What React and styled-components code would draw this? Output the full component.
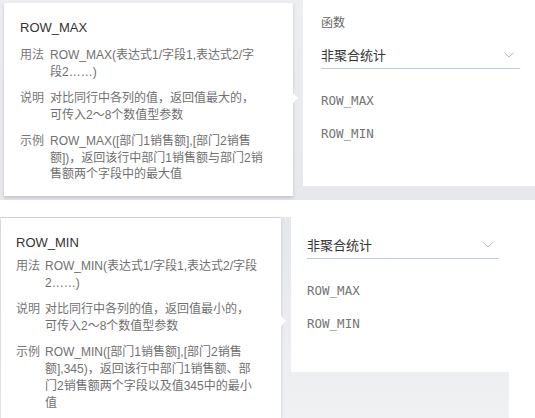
import React from "react";
import styled, { createGlobalStyle } from "styled-components";

const Global = createGlobalStyle`
  html, body { margin: 0; padding: 0; background: #ffffff; }
  body { width: 535px; height: 418px; overflow: hidden; font-family: "Liberation Sans", "Noto Sans CJK SC", sans-serif; }
`;

const Page = styled.div`
  width: 535px;
  height: 418px;
  display: flex;
  flex-direction: column;
  background: #ffffff;
`;

const ShotTop = styled.section`
  height: 200px;
  display: flex;
  align-items: flex-start;
  background: linear-gradient(180deg, #eceef1 0%, #e6e8ec 100%);
  box-sizing: border-box;
  padding-left: 4px;
`;

const Gap = styled.div`
  height: 17px;
  background: #ffffff;
`;

const ShotBottom = styled.section`
  height: 201px;
  width: 509px;
  display: flex;
  align-items: flex-start;
  background: linear-gradient(180deg, #e4e7ec 0%, #f0f1f3 100%);
  box-sizing: border-box;
  padding-left: 1px;
`;

const Tip = styled.div`
  position: relative;
  box-sizing: border-box;
  background: #ffffff;
  width: ${(p) => p.$w}px;
  height: ${(p) => p.$h}px;
  margin-top: ${(p) => p.$top}px;
  padding: ${(p) => p.$pad};
  border-top: ${(p) => (p.$line ? "1px solid #cfd3d8" : "none")};
  box-shadow: 0 2px 3px rgba(120, 128, 140, 0.35);
  display: flex;
  flex-direction: column;
  gap: ${(p) => p.$gap}px;
`;

const Arrow = styled.span`
  position: absolute;
  right: -5px;
  top: ${(p) => p.$y}px;
  width: 0;
  height: 0;
  border-top: 5px solid transparent;
  border-bottom: 5px solid transparent;
  border-left: 5px solid #ffffff;
`;

const Title = styled.div`
  font-size: 13px;
  line-height: 16px;
  color: #333333;
  margin-bottom: ${(p) => p.$mb}px;
`;

const Row = styled.div`
  display: flex;
  gap: ${(p) => p.$gap}px;
  font-size: 12px;
  line-height: ${(p) => p.$lh}px;
  color: #707070;
  white-space: nowrap;
`;

const Label = styled.span`
  flex: none;
  color: #767676;
`;

const Lines = styled.div`
  display: flex;
  flex-direction: column;
`;

const Panel = styled.div`
  box-sizing: border-box;
  background: #ffffff;
  margin-left: 10px;
  width: ${(p) => p.$w}px;
  height: ${(p) => p.$h}px;
  padding: ${(p) => p.$pad};
  display: flex;
  flex-direction: column;
`;

const FieldLabel = styled.div`
  font-family: "Noto Sans CJK SC", sans-serif;
  font-size: 12px;
  line-height: 16px;
  color: #666666;
  margin-bottom: 17px;
`;

const Select = styled.div`
  display: flex;
  align-items: center;
  justify-content: space-between;
  width: ${(p) => p.$w}px;
  height: 22px;
  padding-right: 6px;
  box-sizing: border-box;
  border-bottom: 1.5px solid #b8cdf3;
  font-family: "Noto Sans CJK SC", sans-serif;
  font-size: 13px;
  line-height: 16px;
  color: #333333;
  padding-bottom: 6px;
  margin-bottom: 24px;
`;

const Option = styled.div`
  font-family: "DejaVu Sans Mono", "Liberation Mono", monospace;
  font-size: 12.5px;
  line-height: 16px;
  color: #747474;
  margin-bottom: 17px;
`;

const Chevron = () => (
  <svg width="10" height="6" viewBox="0 0 10 6">
    <path d="M0.5 0.8 L5 5 L9.5 0.8" fill="none" stroke="#b5b8bd" strokeWidth="1" />
  </svg>
);

const Info = ({ title, rows, lh, titleMb, labelGap }) => (
  <>
    <Title $mb={titleMb}>{title}</Title>
    {rows.map((r) => (
      <Row key={r.label} $lh={lh} $gap={labelGap}>
        <Label>{r.label}</Label>
        <Lines>
          {r.lines.map((l, i) => (
            <span key={i}>{l}</span>
          ))}
        </Lines>
      </Row>
    ))}
  </>
);

const maxRows = [
  { label: "用法", lines: ["ROW_MAX(表达式1/字段1,表达式2/字", "段2……)"] },
  { label: "说明", lines: ["对比同行中各列的值，返回值最大的，", "可传入2～8个数值型参数"] },
  {
    label: "示例",
    lines: ["ROW_MAX([部门1销售额],[部门2销售", "额])，返回该行中部门1销售额与部门2销", "售额两个字段中的最大值"],
  },
];

const minRows = [
  { label: "用法", lines: ["ROW_MIN(表达式1/字段1,表达式2/字段", "2……)"] },
  { label: "说明", lines: ["对比同行中各列的值，返回值最小的，", "可传入2～8个数值型参数"] },
  {
    label: "示例",
    lines: ["ROW_MIN([部门1销售额],[部门2销售", "额],345)，返回该行中部门1销售额、部", "门2销售额两个字段以及值345中的最小", "值"],
  },
];

export default function App() {
  return (
    <Page>
      <Global />
      <ShotTop>
        <Tip $w={289} $h={193} $top={3} $pad="17px 16px 0 16px" $gap={10}>
          <Arrow $y={90} />
          <Info title="ROW_MAX" rows={maxRows} lh={16.5} titleMb={1} labelGap={6} />
        </Tip>
        <Panel $w={232} $h={186} $pad="14px 16px 0 18px">
          <FieldLabel>函数</FieldLabel>
          <Select $w={199}>
            <span>非聚合统计</span>
            <Chevron />
          </Select>
          <Option>ROW_MAX</Option>
          <Option>ROW_MIN</Option>
        </Panel>
      </ShotTop>
      <Gap />
      <ShotBottom>
        <Tip $w={280} $h={201} $top={0} $line $pad="17px 12px 0 15px" $gap={9}>
          <Arrow $y={98} />
          <Info title="ROW_MIN" rows={minRows} lh={17} titleMb={-2} labelGap={5} />
        </Tip>
        <Panel $w={218} $h={155} $pad="20px 16px 0 16px">
          <Select $w={192}>
            <span>非聚合统计</span>
            <Chevron />
          </Select>
          <Option>ROW_MAX</Option>
          <Option>ROW_MIN</Option>
        </Panel>
      </ShotBottom>
    </Page>
  );
}
